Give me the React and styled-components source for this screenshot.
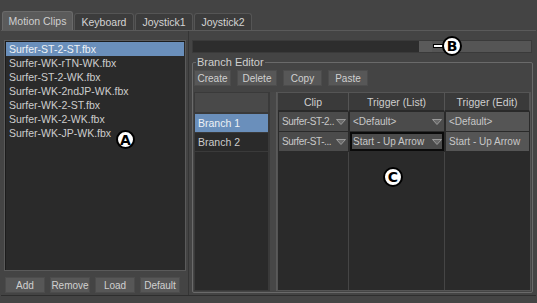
import React from 'react'
import styled, { createGlobalStyle } from 'styled-components'

const Global = createGlobalStyle`
  body {
    margin: 0;
    background: #444;
    font-family: "Liberation Sans", Arial, sans-serif;
  }
`

const Window = styled.div`
  position: relative;
  width: 537px;
  height: 303px;
  background: #444;
  padding-top: 11px;
  box-sizing: border-box;
  display: flex;
  flex-direction: column;
  font-size: 10px;
  color: #cfcfcf;
  overflow: hidden;
`

const TabBar = styled.div`
  display: flex;
  align-items: flex-end;
  height: 19px;
  padding-left: 2px;
  gap: 1px;
`

const Tab = styled.div`
  height: ${p => (p.$active ? 19 : 17)}px;
  width: ${p => p.$w}px;
  display: flex;
  align-items: center;
  justify-content: center;
  box-sizing: border-box;
  background: ${p => (p.$active ? '#5b5b5b' : '#3c3c3c')};
  border: 1px solid ${p => (p.$active ? '#6a6a6a' : '#555')};
  border-bottom: none;
  border-radius: 3px 3px 0 0;
  color: ${p => (p.$active ? '#cfcfcf' : '#d4d4d4')};
  font-size: 10.5px;
`

const Body = styled.div`
  display: flex;
  height: 266px;
  border-top: 1px solid #5a5a5a;
  border-bottom: 1px solid #2e2e2e;
  margin: 0 1px;
  box-sizing: border-box;
`

const LeftPane = styled.div`
  width: 188px;
  padding: 9px 2px 2px 3px;
  box-sizing: border-box;
  display: flex;
  flex-direction: column;
  border-right: 1px solid #353535;
`

const ClipList = styled.div`
  flex: 1;
  background: #2a2a2a;
  border: 1px solid #5a5a5a;
  box-shadow: inset 1px 1px 0 #1c1c1c;
  padding-top: 1px;
`

const ClipItem = styled.div`
  height: 14px;
  line-height: 14px;
  padding-left: 3px;
  margin: 0 1px;
  font-size: 10.5px;
  background: ${p => (p.$selected ? '#6a8fbb' : 'transparent')};
  color: ${p => (p.$selected ? '#eef2f6' : '#cdcdcd')};
`

const ButtonRow = styled.div`
  display: flex;
  gap: 5px;
  padding: 6px 0 0 1px;
`

const Button = styled.div`
  width: ${p => p.$w || 40}px;
  height: 16px;
  line-height: 15px;
  text-align: center;
  background: #575757;
  border: 1px solid #4c4c4c;
  box-sizing: border-box;
  color: #d0d0d0;
`

const RightPane = styled.div`
  flex: 1;
  padding: 9px 3px 2px 3px;
  box-sizing: border-box;
  display: flex;
  flex-direction: column;
`

const Slider = styled.div`
  height: 13px;
  display: flex;
  margin-right: 1px;
  border: 1px solid #3a3a3a;
  box-sizing: border-box;
`

const Track = styled.div`
  background: ${p => p.$c};
  width: ${p => (p.$w ? p.$w + 'px' : 'auto')};
  flex: ${p => (p.$w ? 'none' : 1)};
`

const Group = styled.fieldset`
  flex: 1;
  margin: 4px 0 0 0;
  padding: 0 1px 1px 1px;
  border: 1px solid #6a6a6a;
  border-radius: 2px;
  display: flex;
  flex-direction: column;
  min-width: 0;
`

const Legend = styled.legend`
  padding: 0 1px;
  margin-left: 2px;
  color: #cfcfcf;
  font-size: 11px;
  line-height: 11px;
`

const Toolbar = styled.div`
  display: flex;
  gap: 6px;
  padding: 2px 0 6px 0;
`

const Split = styled.div`
  flex: 1;
  display: flex;
`

const BranchList = styled.div`
  width: 73px;
  background: #2a2a2a;
  border: 1px solid #3a3a3a;
  display: flex;
  flex-direction: column;
`

const BranchHeader = styled.div`
  height: 19px;
  background: #494949;
  border-bottom: 2px solid #3a3a3a;
`

const BranchRow = styled.div`
  height: 18px;
  line-height: 18px;
  padding-left: 3px;
  font-size: 10.5px;
  background: ${p => (p.$selected ? '#6a8fbb' : '#2a2a2a')};
  color: ${p => (p.$selected ? '#eef2f6' : '#cdcdcd')};
  border-bottom: 1px solid #3a3a3a;
`

const Splitter = styled.div`
  width: 8px;
  background: #474747;
  border-left: 1px solid #3a3a3a;
  border-right: 1px solid #5a5a5a;
  box-sizing: border-box;
`

const Table = styled.div`
  flex: 1;
  background: #2a2a2a;
  border: 1px solid #555;
  display: grid;
  grid-template-columns: 71px 96px 1fr;
  grid-template-rows: 19px 20px 20px 1fr;
`

const HeadCell = styled.div`
  background: #3a3a3a;
  border-right: 1px solid #555;
  border-bottom: 2px solid #2a2a2a;
  display: flex;
  align-items: center;
  justify-content: center;
  color: #cfcfcf;
  font-size: 10.5px;
`

const Cell = styled.div`
  display: flex;
  align-items: center;
  gap: 1px;
  padding: 0 2px 0 3px;
  margin: 0 1px 1px 1px;
  min-width: 0;
  background: ${p => (p.$edit ? '#555' : '#4b4b4b')};
  color: #c8c8c8;
  outline: ${p => (p.$focus ? '2px solid #0a0a0a' : 'none')};
  outline-offset: -2px;
  white-space: nowrap;
  overflow: hidden;
`

const CellText = styled.span`
  flex: 1;
  min-width: 0;
  letter-spacing: ${p => (p.$tight ? '-0.4px' : '0')};
`

const ArrowIcon = styled.svg`
  flex: none;
`

const Column = styled.div`
  border-right: 1px solid ${p => (p.$last ? 'transparent' : '#454545')};
`

const Marker = styled.div`
  position: absolute;
  left: ${p => p.$x}px;
  top: ${p => p.$y}px;
  width: ${p => p.$d}px;
  height: ${p => p.$d}px;
  border-radius: 50%;
  background: #fff;
  border: 2px solid #000;
  box-sizing: border-box;
  display: flex;
  align-items: center;
  justify-content: center;
  color: #000;
  font: bold 14px "DejaVu Sans", sans-serif;
`

const Leader = styled.div`
  position: absolute;
  left: 433px;
  top: 44px;
  width: 9px;
  height: 2px;
  background: #fff;
  border: 1px solid #000;
`

const Arrow = () => (
  <ArrowIcon width="10" height="6" viewBox="0 0 10 6">
    <polygon points="0.5,0.5 9.5,0.5 5,5.5" fill="#6a6a6a" stroke="#9a9a9a" strokeWidth="1" />
  </ArrowIcon>
)

const clips = [
  'Surfer-ST-2-ST.fbx',
  'Surfer-WK-rTN-WK.fbx',
  'Surfer-ST-2-WK.fbx',
  'Surfer-WK-2ndJP-WK.fbx',
  'Surfer-WK-2-ST.fbx',
  'Surfer-WK-2-WK.fbx',
  'Surfer-WK-JP-WK.fbx',
]

export default function App() {
  return (
    <Window>
      <Global />
      <TabBar>
        <Tab $active $w={71}>Motion Clips</Tab>
        <Tab $w={60}>Keyboard</Tab>
        <Tab $w={58}>Joystick1</Tab>
        <Tab $w={58}>Joystick2</Tab>
      </TabBar>
      <Body>
        <LeftPane>
          <ClipList>
            {clips.map((c, i) => (
              <ClipItem key={c} $selected={i === 0}>{c}</ClipItem>
            ))}
          </ClipList>
          <ButtonRow>
            <Button>Add</Button>
            <Button>Remove</Button>
            <Button>Load</Button>
            <Button>Default</Button>
          </ButtonRow>
        </LeftPane>
        <RightPane>
          <Slider>
            <Track $c="#2d2d2d" />
            <Track $c="#5a5a5a" $w={13} />
            <Track $c="#555" $w={99} />
          </Slider>
          <Group>
            <Legend>Branch Editor</Legend>
            <Toolbar>
              <Button $w={37}>Create</Button>
              <Button $w={40}>Delete</Button>
              <Button $w={39}>Copy</Button>
              <Button $w={40}>Paste</Button>
            </Toolbar>
            <Split>
              <BranchList>
                <BranchHeader />
                <BranchRow $selected>Branch 1</BranchRow>
                <BranchRow>Branch 2</BranchRow>
              </BranchList>
              <Splitter />
              <Table>
                <HeadCell>Clip</HeadCell>
                <HeadCell>Trigger (List)</HeadCell>
                <HeadCell>Trigger (Edit)</HeadCell>
                <Cell><CellText $tight>Surfer-ST-2..</CellText><Arrow /></Cell>
                <Cell><CellText>&lt;Default&gt;</CellText><Arrow /></Cell>
                <Cell $edit>&lt;Default&gt;</Cell>
                <Cell><CellText $tight>Surfer-ST-...</CellText><Arrow /></Cell>
                <Cell $focus><CellText>Start - Up Arrow</CellText><Arrow /></Cell>
                <Cell $edit>Start - Up Arrow</Cell>
                <Column />
                <Column />
                <Column $last />
              </Table>
            </Split>
          </Group>
        </RightPane>
      </Body>
      <Marker $x={116} $y={130} $d={19}>A</Marker>
      <Leader />
      <Marker $x={442} $y={36} $d={20}>B</Marker>
      <Marker $x={383} $y={167} $d={20}>C</Marker>
    </Window>
  )
}
